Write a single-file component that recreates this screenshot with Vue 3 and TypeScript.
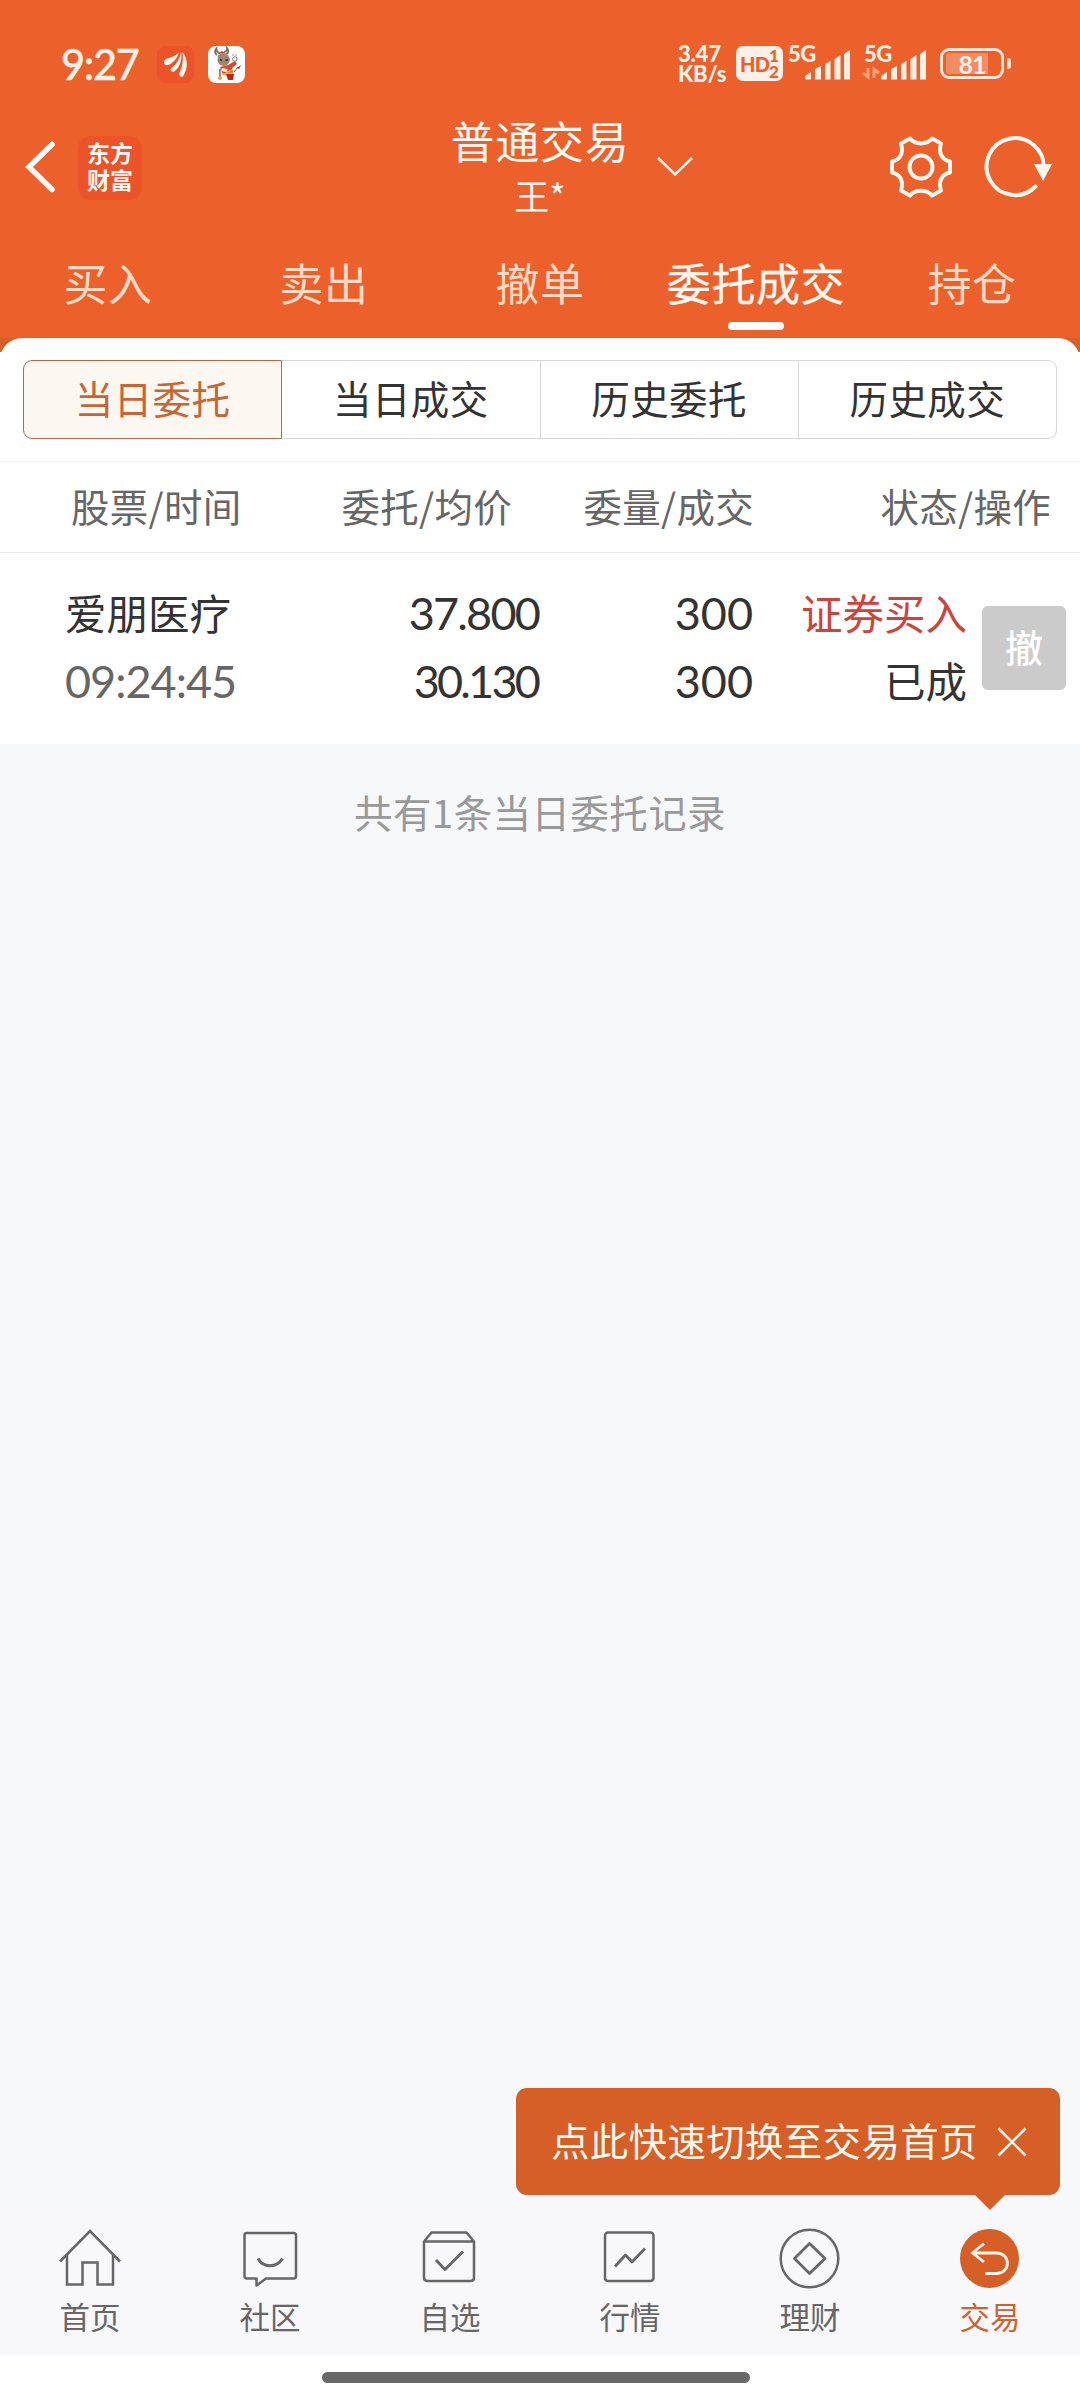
<script setup lang="ts">
interface Quote {
  name: string
  time: string
  price: string
  average: string
  amount: string
  filled: string
  side: string
  status: string
}

const tabs: string[] = ['买入', '卖出', '撤单', '委托成交', '持仓']
const activeTab = '委托成交'
const segments: string[] = ['当日委托', '当日成交', '历史委托', '历史成交']
const activeSegment = '当日委托'
const columns: string[] = ['股票/时间', '委托/均价', '委量/成交', '状态/操作']
const orders: Quote[] = [
  {
    name: '爱朋医疗',
    time: '09:24:45',
    price: '37.800',
    average: '30.130',
    amount: '300',
    filled: '300',
    side: '证券买入',
    status: '已成',
  },
]
const navItems = [
  { id: 'home', label: '首页' },
  { id: 'community', label: '社区' },
  { id: 'picks', label: '自选' },
  { id: 'market', label: '行情' },
  { id: 'wealth', label: '理财' },
  { id: 'trade', label: '交易' },
]
</script>

<template>
  <div class="screen">
    <header class="top">
      <div class="status">
        <span class="clock">9:27</span>
        <svg class="app-a" width="37" height="37" viewBox="0 0 37 37">
          <rect width="37" height="37" rx="8" fill="#ec5328" />
          <g fill="#fff6ee">
            <path d="M7 16C12 15 18 11 22 6.500C20 13 15 18.500 9.500 19.300C8 19.300 7 18 7 16Z" />
            <path d="M13.500 23C19 19 23 13 24 5.800C26 14 22 23 16.500 26C15 26 13.500 25 13.500 23Z" />
            <path d="M22 28C26 20 26.500 12 25.500 5.800C31 13 31.500 23 25.500 31C23.500 31 22 30 22 28Z" />
            <path d="M7 16C7 13.500 9 12.500 12 12C16 11 19 9 22 6.500L13 18L9 19Z" />
          </g>
        </svg>
        <svg class="app-b" width="37" height="37" viewBox="0 0 37 37">
          <rect width="37" height="37" rx="8" fill="#fff" />
          <path d="M9 9C6 7 7 4 8.500 2.500C8.500 6 10 7 12 7M18 8C21 7 20.500 4 19 2C19 5 17 6 16 6" fill="none" stroke="#7b6c66" stroke-width="1.800" />
          <path d="M10 7.500L14 5L18 7.500Z" fill="#c8452a" />
          <path d="M10 9Q15 5.500 20 9L22 13Q22 19 15.500 20Q9.500 19 9.500 14Z" fill="#a08672" />
          <path d="M12 13.500l2 1M17.500 14.500l2.500-1" stroke="#3c2d27" stroke-width="1.500" />
          <path d="M12 21L20 19L27 15L29 18L24 22L25 27L15 29Z" fill="#e0452a" />
          <path d="M14 23L19 26L24 24M15 28L25 27" stroke="#f4b63a" stroke-width="1.600" fill="none" />
          <path d="M14 22L20 23L18 26L13 25Z" fill="#f6e6d6" />
          <path d="M18 28H26L25 34H20Z" fill="#ba251c" />
          <circle cx="26.800" cy="13" r="2.200" fill="#fff" stroke="#807472" />
          <path d="M25 10V8M28 10V8" stroke="#999" />
          <path d="M12 23V33" stroke="#6c5b43" stroke-width="1.400" />
          <circle cx="12" cy="32" r="2" fill="#d9a92f" />
          <path d="M26 26L30 21" stroke="#874333" />
          <path d="M29 22L33 19L31 23Z" fill="#70342a" />
        </svg>
        <span class="speed"><span>3.47</span><span>KB/s</span></span>
        <span class="hd"><b>HD</b><span class="sims"><i>1</i><i>2</i></span></span>
        <span class="net">
          <span class="gen">5G</span>
          <svg width="45" height="30" viewBox="0 0 45 30" fill="#fff0e7">
            <path d="M0 29V26L6 22V29Q6 29.500 5 29.500H1Z" />
            <path d="M10 29V19L16 16V29.500H10Z" />
            <path d="M20 29V14L25.500 11V29.500H20Z" />
            <path d="M29.500 29V9L35.500 5V29.500H29.500Z" />
            <path d="M39 29V4L45 0V29.500H39Z" />
          </svg>
        </span>
        <span class="net second">
          <span class="gen">5G</span>
          <svg class="arrows" width="16" height="12" viewBox="0 0 16 12" fill="none" stroke="#f6a17c" stroke-width="3">
            <path d="M0 6L5 10V1M16 6L11 2V11" />
          </svg>
          <svg width="45" height="30" viewBox="0 0 45 30" fill="#fff0e7">
            <path d="M0 29V26L6 22V29Q6 29.500 5 29.500H1Z" />
            <path d="M10 29V19L16 16V29.500H10Z" />
            <path d="M20 29V14L25.500 11V29.500H20Z" />
            <path d="M29.500 29V9L35.500 5V29.500H29.500Z" />
            <path d="M39 29V4L45 0V29.500H39Z" />
          </svg>
        </span>
        <span class="battery"><span class="charge"></span><span class="level">81</span></span>
        <span class="nub"></span>
      </div>

      <div class="bar">
        <div class="bar-left">
          <svg width="34" height="54" viewBox="0 0 34 54" fill="none" stroke="#fffaf6" stroke-width="5.500" stroke-linecap="round" stroke-linejoin="miter">
            <path d="M29 4.500L6 27L29 49.500" />
          </svg>
          <div class="logo"><span>东方</span><span>财富</span></div>
        </div>
        <div class="titles">
          <div class="title">普通交易</div>
          <div class="account">王*</div>
        </div>
        <svg class="down" width="36" height="20" viewBox="0 0 36 20" fill="none" stroke="#fff3ec" stroke-width="2.600">
          <path d="M1 1L18 17.500L35 1" />
        </svg>
        <div class="bar-right">
          <svg width="64" height="64" viewBox="-32 -32 64 64" fill="none" stroke="#fff6f0" stroke-width="4" stroke-linejoin="round">
            <path d="M-11 -28.500C-6 -22 6 -22 11 -28.500L20 -23.500C17 -14 21 -7 29 -5.500V5.500C21 7 17 14 20 23.500L11 28.500C6 22 -6 22 -11 28.500L-20 23.500C-17 14 -21 7 -29 5.500V-5.500C-21 -7 -17 -14 -20 -23.500Z" />
            <circle r="11.500" />
          </svg>
          <svg width="70" height="64" viewBox="0 0 70 64" fill="none" stroke="#fff6f0" stroke-width="4">
            <path d="M60.500 34A28.500 28.500 0 1 0 52.500 51.500" stroke-linecap="round" />
            <path d="M51 29H69L60 46Z" fill="#fff6f0" stroke="none" />
          </svg>
        </div>
      </div>

      <nav class="tabs">
        <div v-for="tab in tabs" :key="tab" class="tab" :class="{ on: tab === activeTab }">
          <span>{{ tab }}</span>
        </div>
      </nav>
    </header>

    <div class="card-wrap">
      <section class="card">
        <div class="segments">
          <div v-for="seg in segments" :key="seg" class="segment" :class="{ on: seg === activeSegment }">{{ seg }}</div>
        </div>
        <div class="grid head">
          <div v-for="col in columns" :key="col">{{ col }}</div>
        </div>
        <div v-for="order in orders" :key="order.time" class="grid order">
          <div class="pair">
            <span>{{ order.name }}</span>
            <span class="num time">{{ order.time }}</span>
          </div>
          <div class="pair">
            <span class="num price">{{ order.price }}</span>
            <span class="num average">{{ order.average }}</span>
          </div>
          <div class="pair">
            <span class="num">{{ order.amount }}</span>
            <span class="num">{{ order.filled }}</span>
          </div>
          <div class="pair">
            <span class="buy">{{ order.side }}</span>
            <span>{{ order.status }}</span>
          </div>
          <button class="cancel" type="button">撤</button>
        </div>
      </section>
    </div>

    <main class="rest">
      <p class="count">共有1条当日委托记录</p>
      <div class="tip">
        <span>点此快速切换至交易首页</span>
        <svg width="30" height="30" viewBox="0 0 30 30" fill="none" stroke="#fff3ea" stroke-width="2.600">
          <path d="M1.500 1.500L28.500 28.500M28.500 1.500L1.500 28.500" />
        </svg>
      </div>
    </main>

    <footer class="nav">
      <div v-for="item in navItems" :key="item.id" class="nav-item" :class="{ on: item.id === 'trade' }">
        <svg width="64" height="64" viewBox="0 0 64 64" fill="none" stroke="#666" stroke-width="2.500" stroke-linejoin="round">
          <template v-if="item.id === 'home'">
            <path d="M2 35.500L32 5L62 35.500M9 29V58.500H24.500V36.500H39.500V58.500H55V29" stroke-linejoin="miter" />
          </template>
          <template v-else-if="item.id === 'community'">
            <path d="M8.500 7H55.500Q58 7 58 9.500V50Q58 52.500 55.500 52.500H28L18.500 59.500V52.500H9Q6.500 52.500 6.500 50V9.500Q6.500 7 8.500 7Z" />
            <path d="M20 32.500C25 42 39 42 44.500 32.500" stroke-width="3" />
          </template>
          <template v-else-if="item.id === 'picks'">
            <path d="M6 15.500V51.500Q6 55 9.500 55H52.500Q56 55 56 51.500V15.500L48.500 6.500H13.500ZM6 15.500H56" />
            <path d="M18 34L27 43.500L45 25.500" stroke-width="2.800" />
          </template>
          <template v-else-if="item.id === 'market'">
            <rect x="7" y="6.500" width="48.500" height="48.500" rx="3" />
            <path d="M17 40.500L27.500 29L34 36L47 22.500" stroke-width="2.800" />
          </template>
          <template v-else-if="item.id === 'wealth'">
            <circle cx="31.500" cy="32.500" r="28.800" />
            <path d="M31.500 17.500L47 32.500L31.500 47.500L16.500 32.500Z" stroke-width="2.800" />
          </template>
          <template v-else>
            <circle cx="31.500" cy="32.500" r="29.500" fill="#d65f28" stroke="none" />
            <path d="M26 17.500L14.500 27L26 36M15 27H38.500C53 27 53 47.500 38.500 47.500H27" stroke="#fff3ea" stroke-width="2.800" stroke-linejoin="miter" />
          </template>
        </svg>
        <span>{{ item.label }}</span>
      </div>
    </footer>
    <div class="gesture"><span></span></div>
  </div>
</template>

<style>
body {
  background: #fff;
}
</style>

<style scoped>
.screen {
  width: 1080px;
  height: 2400px;
  display: flex;
  flex-direction: column;
  overflow: hidden;
  background: #fff;
  color: #333;
  font-family: "Noto Sans CJK SC", "Noto Sans", sans-serif;
}
.screen * {
  box-sizing: border-box;
  white-space: nowrap;
}
svg {
  display: block;
  flex: none;
  overflow: visible;
}
.top {
  height: 338px;
  background: #ec612b;
  color: #fff8f3;
  flex: none;
}
.status {
  height: 112px;
  padding: 46px 0 0 61px;
  display: flex;
  align-items: flex-start;
  color: #fff0e7;
  font-family: Lato, "Noto Sans CJK SC", sans-serif;
}
.clock {
  width: 96px;
  font-size: 41.500px;
  line-height: 36px;
  font-weight: 500;
  letter-spacing: -1.3px;
  -webkit-text-stroke: 0.4px #fff0e7;
}
.app-b {
  margin-left: 14px;
}
.speed {
  width: 58px;
  margin-left: 433px;
  display: flex;
  flex-direction: column;
  font-size: 22px;
  font-weight: 900;
  letter-spacing: -0.2px;
  line-height: 20px;
  margin-top: -2px;
}
.hd {
  width: 47px;
  height: 35px;
  border-radius: 7px;
  background: #fff0e7;
  color: #ec612b;
  display: flex;
  align-items: center;
  padding-left: 4px;
  font-size: 20px;
  letter-spacing: -0.8px;
}
.hd b {
  font-weight: 900;
}
.sims {
  display: flex;
  flex-direction: column;
  font-size: 17px;
  line-height: 15.500px;
  font-weight: 900;
}
.sims i {
  font-style: normal;
}
.net {
  position: relative;
  width: 45px;
  margin: 4px 0 0 22px;
}
.net.second {
  margin-left: 31px;
}
.gen {
  position: absolute;
  left: -17px;
  top: -6px;
  font-size: 22px;
  line-height: 20px;
  font-weight: 900;
  letter-spacing: -0.5px;
}
.arrows {
  position: absolute;
  left: -18px;
  top: 17px;
}
.battery {
  position: relative;
  width: 64px;
  height: 31px;
  margin: 2px 0 0 14px;
  border: 3px solid #ffe6d9;
  border-radius: 9px;
  padding: 2px 3px;
}
.charge {
  display: block;
  width: 42px;
  height: 21px;
  border-radius: 3px 0 0 3px;
  background: #f28c63;
}
.level {
  position: absolute;
  inset: 0;
  text-align: center;
  font-size: 25px;
  line-height: 26px;
  font-weight: 700;
  letter-spacing: -1px;
}
.nub {
  width: 4px;
  height: 11px;
  margin: 12px 0 0 3px;
  border-radius: 0 3px 3px 0;
  background: #ffe6d9;
}
.bar {
  height: 120px;
  display: flex;
}
.bar-left {
  width: 440px;
  padding: 24px 0 0 23px;
  display: flex;
  align-items: flex-start;
}
.bar-left svg {
  margin-top: 4px;
}
.logo {
  width: 64px;
  height: 64px;
  margin-left: 21px;
  border-radius: 13px;
  background: #ec5328;
  display: flex;
  flex-direction: column;
  align-items: center;
  padding-top: 3px;
  font-size: 23px;
  line-height: 27px;
  font-weight: 700;
}
.titles {
  width: 200px;
  text-align: center;
}
.title {
  font-size: 44px;
  line-height: 60px;
  letter-spacing: 0.7px;
  margin-top: -2px;
}
.account {
  font-size: 35px;
  line-height: 50px;
}
.down {
  margin: 45px 0 0 17px;
}
.bar-right {
  margin-left: auto;
  padding: 23px 27px 0 0;
  display: flex;
  gap: 30px;
}
.tabs {
  height: 106px;
  display: flex;
}
.tab {
  flex: 1;
  display: flex;
  flex-direction: column;
  align-items: center;
  font-size: 44px;
  line-height: 60px;
  letter-spacing: 0.6px;
  padding-top: 20px;
  color: #ffdbc5;
}
.tab.on {
  color: #fff8f0;
  -webkit-text-stroke: 0.3px #fff8f0;
}
.tab.on::after {
  content: "";
  width: 56px;
  height: 8px;
  margin-top: 10px;
  border-radius: 4px;
  background: #fff;
}
.card-wrap {
  height: 406px;
  flex: none;
  background: linear-gradient(#d2602a 14px, #fff 14px);
}
.card {
  height: 406px;
  padding-top: 22px;
  border-radius: 22px 22px 0 0;
  background: #fff;
}
.segments {
  height: 79px;
  margin: 0 23px 22px;
  display: flex;
}
.segment {
  flex: 1;
  border: 1px solid #d6d6d6;
  border-left-width: 0;
  text-align: center;
  font-size: 38.500px;
  line-height: 73px;
  letter-spacing: 0.4px;
}
.segment:first-child {
  border-left-width: 1px;
  border-radius: 9px 0 0 9px;
}
.segment:last-child {
  border-radius: 0 9px 9px 0;
}
.segment.on {
  border-color: #b56a48;
  background: #fdf7f2;
  color: #c96533;
}
.grid {
  display: grid;
  grid-template-columns: 270px 242px 242px 1fr;
  text-align: right;
}
.grid > :first-child {
  text-align: left;
}
.head {
  height: 92px;
  border-top: 1px solid #f5f5f5;
  border-bottom: 1px solid #ebebeb;
  padding-right: 29px;
  color: #666;
  font-size: 38.500px;
  line-height: 86px;
  letter-spacing: 0.3px;
}
.head > :first-child {
  padding-left: 71px;
}
.order {
  grid-template-columns: 270px 270px 213px 214px 1fr;
  padding-top: 25px;
  font-size: 41.500px;
  line-height: 68px;
}
.pair {
  display: flex;
  flex-direction: column;
}
.pair:first-child {
  padding-left: 65px;
}
.num {
  position: relative;
  top: 1px;
  font-family: Lato, "Noto Sans CJK SC", sans-serif;
  font-size: 45px;
}
.time {
  color: #666;
  letter-spacing: -1px;
}
.price {
  letter-spacing: -1.8px;
  padding-right: 1px;
}
.average {
  letter-spacing: -2.8px;
  padding-right: 2px;
}
.buy {
  color: #cb453c;
}
.cancel {
  width: 84px;
  height: 84px;
  margin: 28px 0 0 15px;
  padding: 0 0 4px;
  border: 0;
  border-radius: 6px;
  background: #cbcbcb;
  color: #fff;
  font: 500 38px/80px "Noto Sans CJK SC", sans-serif;
}
.rest {
  height: 1465px;
  flex: none;
  background: #f7f8fa;
  position: relative;
}
.count {
  margin: 0;
  padding-top: 37px;
  text-align: center;
  color: #999;
  font-size: 38.500px;
  line-height: 61px;
  letter-spacing: 0.4px;
}
.tip {
  position: absolute;
  right: 20px;
  bottom: 14px;
  width: 544px;
  height: 107px;
  padding: 0 33px 0 35px;
  border-radius: 11px;
  background: #d65f28;
  color: #fff8ee;
  display: flex;
  align-items: center;
  justify-content: space-between;
  font-size: 38.500px;
  line-height: 101px;
  letter-spacing: 0.3px;
}
.tip span {
  padding-bottom: 4px;
}
.tip::after {
  content: "";
  position: absolute;
  right: 55px;
  top: 107px;
  border: 15px solid transparent;
  border-top-color: #d65f28;
  border-bottom: 0;
}
.nav {
  height: 146px;
  flex: none;
  display: flex;
  background: #f8f8fa;
  color: #666;
}
.nav-item {
  flex: 1;
  display: flex;
  flex-direction: column;
  align-items: center;
  padding-top: 17px;
  font-size: 30.500px;
  line-height: 44px;
}
.nav-item span {
  margin-top: 4px;
}
.nav-item.on {
  color: #cf6230;
}
.gesture {
  height: 45px;
  padding: 17px 0 0 322px;
}
.gesture span {
  display: block;
  width: 428px;
  height: 11px;
  border-radius: 6px;
  background: #696969;
}
</style>
